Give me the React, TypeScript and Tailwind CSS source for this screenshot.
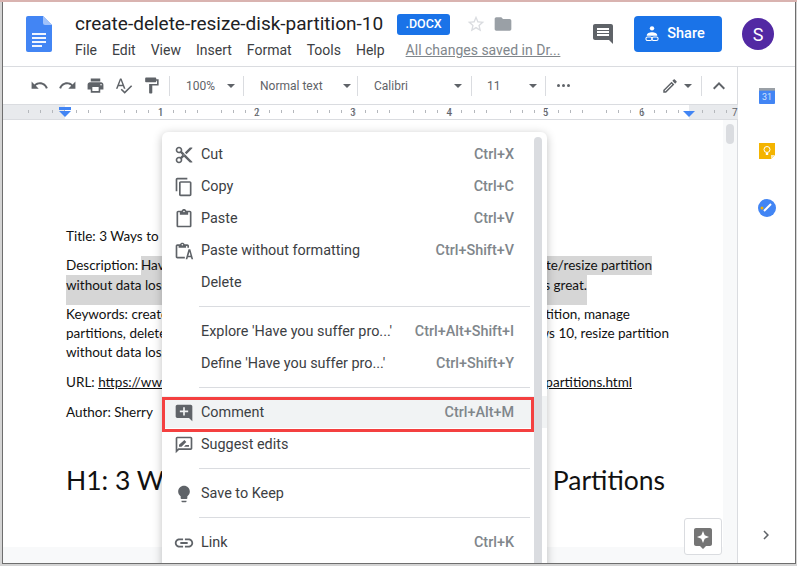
import type { ReactNode } from "react";

const P = {
  cut: "M9.64 7.64c.23-.5.36-1.05.36-1.64 0-2.21-1.79-4-4-4S2 3.79 2 6s1.79 4 4 4c.59 0 1.14-.13 1.64-.36L10 12l-2.36 2.36C7.14 14.13 6.59 14 6 14c-2.21 0-4 1.79-4 4s1.79 4 4 4 4-1.79 4-4c0-.59-.13-1.14-.36-1.64L12 14l7 7h3v-1L9.64 7.64zM6 8c-1.1 0-2-.89-2-2s.9-2 2-2 2 .89 2 2-.9 2-2 2zm0 12c-1.1 0-2-.89-2-2s.9-2 2-2 2 .89 2 2-.9 2-2 2zm6-7.5c-.28 0-.5-.22-.5-.5s.22-.5.5-.5.5.22.5.5-.22.5-.5.5zM19 3l-6 6 2 2 7-7V3h-3z",
  copy: "M16 1H4c-1.1 0-2 .9-2 2v14h2V3h12V1zm3 4H8c-1.1 0-2 .9-2 2v14c0 1.1.9 2 2 2h11c1.1 0 2-.9 2-2V7c0-1.1-.9-2-2-2zm0 16H8V7h11v14z",
  paste: "M19 2h-4.18C14.4.84 13.3 0 12 0c-1.3 0-2.4.84-2.82 2H5c-1.1 0-2 .9-2 2v16c0 1.1.9 2 2 2h14c1.1 0 2-.9 2-2V4c0-1.1-.9-2-2-2zm-7 0c.55 0 1 .45 1 1s-.45 1-1 1-1-.45-1-1 .45-1 1-1zm7 18H5V4h2v3h10V4h2v16z",
  pastePlain: "M13 21H4c-1 0-2-.9-2-2V6c0-1 1-2 2-2h3.2C7.6 2.8 8.7 2 10 2s2.4.8 2.8 2H16c1 0 2 1 2 2v2h-2V6h-1.5v2h-9V6H4v13h9v2zM10 3.5c-.5 0-1 .4-1 1s.5 1 1 1 1-.4 1-1-.5-1-1-1zM18 10h1.6L23 22h-2l-.7-2.500h-3.600L16 22h-2l3.400-12zm.8 2.800L17.200 17.800h2.600l-1-5z",
  addComment: "M22 4c0-1.1-.9-2-2-2H4c-1.1 0-2 .9-2 2v12c0 1.1.9 2 2 2h14l4 4V4zm-5 7h-4v4h-2v-4H7V9h4V5h2v4h4v2z",
  suggest: "M20 2H4c-1.100 0-2 .9-2 2v18l4-4h14c1.100 0 2-.9 2-2V4c0-1.100-.9-2-2-2zm0 14H5.170L4 17.170V4h16v12zM6 14v-2.300L12.500 6l2.300 2.300L9 14H6zm6 0l2-2h4v2h-6z",
  bulb: "M9 21c0 .55.45 1 1 1h4c.55 0 1-.45 1-1v-1H9v1zm3-19C8.140 2 5 5.140 5 9c0 2.380 1.190 4.470 3 5.740V17c0 .55.45 1 1 1h6c.55 0 1-.45 1-1v-2.260c1.810-1.270 3-3.360 3-5.740 0-3.860-3.140-7-7-7z",
  link: "M3.900 12c0-1.710 1.390-3.100 3.100-3.100h4V7H7c-2.760 0-5 2.240-5 5s2.240 5 5 5h4v-1.900H7c-1.710 0-3.100-1.390-3.100-3.100zM8 13h8v-2H8v2zm9-6h-4v1.900h4c1.710 0 3.100 1.390 3.100 3.100s-1.390 3.100-3.100 3.100h-4V17h4c2.760 0 5-2.240 5-5s-2.240-5-5-5z",
  undo: "M12.500 8c-2.650 0-5.050.99-6.900 2.600L2 7v9h9l-3.620-3.620c1.390-1.160 3.160-1.880 5.120-1.880 3.540 0 6.550 2.310 7.600 5.500l2.370-.78C21.080 11.030 17.150 8 12.500 8z",
  redo: "M18.400 10.600C16.550 8.990 14.150 8 11.500 8c-4.650 0-8.580 3.030-9.960 7.220L3.900 16c1.050-3.190 4.050-5.500 7.600-5.500 1.950 0 3.730.72 5.120 1.880L13 16h9V7l-3.600 3.600z",
  print: "M19 8H5c-1.660 0-3 1.340-3 3v6h4v4h12v-4h4v-6c0-1.660-1.340-3-3-3zm-3 11H8v-5h8v5zm3-7c-.55 0-1-.45-1-1s.45-1 1-1 1 .45 1 1-.45 1-1 1zm-1-9H6v4h12V3z",
  spell: "M12.450 16h2.090L9.430 3H7.570L2.460 16h2.090l1.120-3h5.640l1.140 3zm-6.020-5L8.500 5.480 10.570 11H6.430zm15.160.59l-8.090 8.090L9.830 16l-1.410 1.410 5.090 5.090L23 13l-1.410-1.410z",
  paint: "M18 4V3c0-.55-.45-1-1-1H5c-.55 0-1 .45-1 1v4c0 .55.45 1 1 1h12c.55 0 1-.45 1-1V6h1v4H9v11c0 .55.45 1 1 1h2c.55 0 1-.45 1-1v-9h8V4h-3z",
  pen: "M14.060 9.020l.92.92L5.920 19H5v-.92l9.060-9.060M17.660 3c-.25 0-.51.1-.7.29l-1.830 1.830 3.750 3.750 1.830-1.830c.39-.39.39-1.020 0-1.410l-2.340-2.340c-.2-.2-.45-.29-.71-.29zm-3.600 3.190L3 17.250V21h3.750L17.810 9.940l-3.750-3.750z",
  comments: "M21.990 4c0-1.100-.89-2-1.990-2H4c-1.100 0-2 .9-2 2v12c0 1.100.9 2 2 2h14l4 4-.01-18zM18 14H6v-2h12v2zm0-3H6V9h12v2zm0-3H6V6h12v2z",
  folder: "M10 4H4c-1.100 0-1.990.9-1.990 2L2 18c0 1.100.9 2 2 2h16c1.100 0 2-.9 2-2V8c0-1.100-.9-2-2-2h-8l-2-2z",
  star: "M22 9.240l-7.190-.62L12 2 9.190 8.630 2 9.240l5.460 4.730L5.820 21 12 17.270 18.180 21l-1.630-7.030L22 9.240zM12 15.400l-3.760 2.270 1-4.280-3.320-2.880 4.380-.38L12 6.100l1.710 4.040 4.380.38-3.320 2.880 1 4.280L12 15.400z",
  less: "M12 8l-6 6 1.410 1.410L12 10.830l4.590 4.580L18 14z",
  chevron: "M10 6L8.590 7.410 13.170 12l-4.580 4.590L10 18l6-6z",
  explore: "M19 3H5c-1.100 0-2 .9-2 2v14c0 1.100.9 2 2 2h4l3 3 3-3h4c1.100 0 2-.9 2-2V5c0-1.100-.9-2-2-2zm-7 3l1.700 4.300L18 12l-4.300 1.700L12 18l-1.700-4.300L6 12l4.300-1.700L12 6z",
};

function Icon({ d, className }: { d: string; className: string }) {
  return (
    <svg viewBox="0 0 24 24" className={className} fill="currentColor">
      <path d={d} fillRule="evenodd" />
    </svg>
  );
}

function Caret() {
  return <span className="h-0 w-0 border-x-[4px] border-t-[4px] border-x-transparent border-t-[#5f6368]" />;
}

function Divider() {
  return <span className="h-[20px] w-px shrink-0 bg-[#dadce0]" />;
}

function ToolBtn({ d }: { d: string }) {
  return (
    <span className="flex h-[28px] w-[28px] shrink-0 items-center justify-center">
      <Icon d={d} className="h-[19px] w-[19px] text-[#5f6368]" />
    </span>
  );
}

function Pick({ label, className }: { label: string; className: string }) {
  return (
    <span className={`flex shrink-0 items-center justify-between text-[12px] text-[#5f6368] ${className}`}>
      {label}
      <Caret />
    </span>
  );
}

function Ruler() {
  const ticks = Array.from({ length: 62 }, (_, i) => i);
  return (
    <svg viewBox="3 0 735 14" className="block h-[14px] w-[735px] font-['Roboto',sans-serif]">
      <rect x="3" y="0" width="62" height="14" fill="#e8eaed" />
      <rect x="689" y="0" width="49" height="14" fill="#e8eaed" />
      {ticks.map((i) => {
        const x = 16 + i * 12.04;
        if (i % 8 === 0) return null;
        const tall = i % 4 === 0;
        return <rect key={i} x={Math.round(x)} y={tall ? 3 : 5} width="1" height={tall ? 8 : 3} fill="#b5b8bc" />;
      })}
      {[1, 2, 3, 4, 5, 6].map((n) => (
        <text key={n} x={64.500 + n * 96.200} y="11" fontSize="10" textAnchor="middle" fill="#5f6368">
          {n}
        </text>
      ))}
      <text x="737.500" y="11" fontSize="10" textAnchor="end" fill="#5f6368">
        7
      </text>
      <rect x="59" y="2" width="12" height="3" fill="#4285f4" />
      <path d="M59 6h12l-6 6z" fill="#4285f4" />
      <path d="M683 6h12l-6 6z" fill="#4285f4" />
    </svg>
  );
}

function Row({ d, label, keys, iconClass }: { d?: string; label: string; keys?: string; iconClass?: string }) {
  return (
    <div className="flex h-[32px] items-center pr-[33px] pt-[2px]">
      <span className="flex w-[39px] shrink-0 items-center justify-center pl-[5px]">
        {d && <Icon d={d} className={iconClass ?? "h-[20px] w-[20px] text-[#5f6368]"} />}
      </span>
      <span className="text-[14.400px] text-[#3c4043]">{label}</span>
      {keys && <span className="ml-auto text-[14.400px] font-medium text-[#80868b]">{keys}</span>}
    </div>
  );
}

function MenuLine() {
  return (
    <div className="flex h-[17px] items-center pl-[37px] pr-[17px]">
      <div className="h-px w-full bg-[#dadce0]" />
    </div>
  );
}

function DocLine({ children, className }: { children: ReactNode; className: string }) {
  return <div className={`flex h-[19px] items-center justify-between whitespace-nowrap ${className}`}>{children}</div>;
}

export default function App() {
  return (
    <div className="h-[566px] w-[797px] overflow-hidden border-t-2 border-[#d9b3b0] bg-[#d4d4d4] pb-[2px] pl-[2px] pr-[1px] font-['Roboto',sans-serif]">
      <div className="relative flex h-full flex-col overflow-hidden border-x border-b border-[#6e6e6e] bg-white">
        {/* Header */}
        <header className="flex h-[65px] shrink-0 border-b border-[#dadce0]">
          <div className="ml-[23px] mt-[14px] w-[26px] shrink-0">
            <svg viewBox="0 0 26 36" className="h-[36px] w-[26px]">
              <path d="M2 0h15l9 9v25a2 2 0 0 1-2 2H2a2 2 0 0 1-2-2V2a2 2 0 0 1 2-2z" fill="#4285f4" />
              <path d="M17 0l9 9h-7a2 2 0 0 1-2-2z" fill="#a1c2fa" />
              <path d="M6 17h14v2H6zM6 21h14v2H6zM6 25h14v2H6zM6 29h10v2H6z" fill="#f1f5fe" />
            </svg>
          </div>
          <div className="ml-[23px] flex-1">
            <div className="mt-[11px] flex h-[22px] items-center">
              <span className="text-[19px] text-[#202124]">create-delete-resize-disk-partition-10</span>
              <span className="ml-[14px] flex h-[21px] w-[53px] items-center justify-center rounded-[3px] bg-[#1a73e8] text-[12.500px] font-medium text-white">
                .DOCX
              </span>
              <Icon d={P.star} className="ml-[16px] h-[20px] w-[20px] text-[#dadce0]" />
              <Icon d={P.folder} className="ml-[7px] h-[20px] w-[20px] text-[#9aa0a6]" />
            </div>
            <div className="mt-[5px] flex items-center gap-[15px] text-[14px] text-[#3c4043]">
              <span>File</span>
              <span>Edit</span>
              <span>View</span>
              <span>Insert</span>
              <span>Format</span>
              <span>Tools</span>
              <span>Help</span>
              <span className="ml-[6px] text-[#80868b] underline">All changes saved in Dr...</span>
            </div>
          </div>
          <div className="flex items-center pr-[21px]">
            <Icon d={P.comments} className="h-[24px] w-[24px] text-[#5f6368]" />
            <span className="ml-[19px] flex h-[36px] w-[88px] items-center justify-center gap-[8px] rounded-[4px] bg-[#1a73e8] pr-[6px] text-[14.500px] font-medium text-white">
              <svg viewBox="0 0 16 20" className="h-[18px] w-[14px]" fill="none">
                <circle cx="8" cy="3.500" r="2.500" fill="#fff" />
                <path d="M2 12c0-3 3-4 6-4s6 1 6 4z" fill="#fff" />
                <rect x="1" y="13.500" width="7" height="4" rx="2" stroke="#fff" strokeWidth="1.200" />
                <rect x="8" y="13.500" width="7" height="4" rx="2" stroke="#fff" strokeWidth="1.200" />
              </svg>
              Share
            </span>
            <span className="ml-[20px] flex h-[32px] w-[32px] items-center justify-center rounded-full bg-[#5229a3] text-[18px] text-white">
              S
            </span>
          </div>
        </header>

        <div className="flex min-h-0 flex-1">
          <div className="flex w-[735px] shrink-0 flex-col border-r border-[#dadce0]">
            {/* Toolbar */}
            <div className="flex h-[38px] shrink-0 items-center border-b border-[#dadce0] pl-[22px]">
              <ToolBtn d={P.undo} />
              <ToolBtn d={P.redo} />
              <ToolBtn d={P.print} />
              <ToolBtn d={P.spell} />
              <ToolBtn d={P.paint} />
              <span className="w-[4px]" />
              <Divider />
              <Pick label="100%" className="w-[73px] pl-[16px] pr-[8px]" />
              <Divider />
              <Pick label="Normal text" className="w-[113px] pl-[16px] pr-[6px]" />
              <Divider />
              <Pick label="Calibri" className="w-[113px] pl-[16px] pr-[9px]" />
              <Divider />
              <Pick label="11" className="w-[73px] pl-[15px] pr-[8px]" />
              <Divider />
              <span className="ml-[11px] flex w-[14px] gap-[2px]">
                <span className="h-[3px] w-[3px] rounded-full bg-[#5f6368]" />
                <span className="h-[3px] w-[3px] rounded-full bg-[#5f6368]" />
                <span className="h-[3px] w-[3px] rounded-full bg-[#5f6368]" />
              </span>
              <span className="flex-1" />
              <Icon d={P.pen} className="h-[18px] w-[18px] text-[#5f6368]" />
              <span className="ml-[5px] mr-[9px] flex items-center">
                <Caret />
              </span>
              <Divider />
              <Icon d={P.less} className="ml-[5px] mr-[6px] h-[24px] w-[24px] text-[#5f6368]" />
            </div>
            {/* Ruler */}
            <div className="h-[15px] shrink-0 border-b border-[#dadce0] bg-white">
              <Ruler />
            </div>
            {/* Document */}
            <div className="relative min-h-0 flex-1 overflow-hidden bg-[#f8f9fa]">
              <div className="h-[427px] w-[720px] bg-white pl-[63px] pt-[107px] font-['Lato',sans-serif] text-[13.500px] text-[#111]">
                <DocLine className="w-[400px]">Title: 3 Ways to Create</DocLine>
                <div className="mt-[10px] flex h-[19px] w-[586px] items-center whitespace-nowrap">
                  <span className="w-[75px] shrink-0">Description: </span>
                  <span className="flex h-[19px] flex-1 items-center justify-between bg-[#d6d6d6]">
                    <span>Have</span>
                    <span>ate/resize partition</span>
                  </span>
                </div>
                <DocLine className="h-[30px] w-[521px] items-start bg-[#d6d6d6]">
                  <span>without data loss</span>
                  <span>is great.</span>
                </DocLine>
                <DocLine className="w-[564px]">
                  <span>Keywords: create</span>
                  <span>rtition, manage</span>
                </DocLine>
                <DocLine className="w-[603px]">
                  <span>partitions, delete</span>
                  <span>ws 10, resize partition</span>
                </DocLine>
                <DocLine className="w-[400px]">without data loss</DocLine>
                <DocLine className="mt-[11px] w-[566px]">
                  <span>
                    URL: <span className="underline">https://www</span>
                  </span>
                  <span className="underline">-partitions.html</span>
                </DocLine>
                <DocLine className="mt-[11px] w-[400px]">Author: Sherry</DocLine>
                <DocLine className="mt-[40px] h-[38px] w-[599px] text-[26.500px]">
                  <span>H1: 3 Ways</span>
                  <span>Partitions</span>
                </DocLine>
              </div>
              <div className="absolute left-[723px] top-[4px] h-[20px] w-[8px] rounded-full bg-[#dadce0]" />
              <span className="absolute left-[681px] top-[398px] flex h-[37px] w-[38px] items-center justify-center rounded-[3px] border border-[#dadce0] bg-white">
                <Icon d={P.explore} className="h-[24px] w-[24px] text-[#757575]" />
              </span>
            </div>
          </div>

          {/* Side panel */}
          <aside className="flex flex-1 flex-col items-center pt-[21px]">
            <svg viewBox="0 0 18 18" className="h-[16px] w-[16px]">
              <rect width="18" height="18" rx="1" fill="#4285f4" />
              <rect width="18" height="3" fill="#9aa0a6" />
              <text x="9" y="14" fontSize="10" textAnchor="middle" fill="#d2e3fc">31</text>
            </svg>
            <svg viewBox="0 0 16 16" className="mt-[39px] h-[16px] w-[16px]">
              <path d="M0 0h16v12l-4 4H0z" fill="#f4b400" />
              <path d="M12 16v-4h4z" fill="#fbe9b2" />
              <circle cx="8" cy="6.500" r="3" fill="none" stroke="#fff" strokeWidth="1" />
              <rect x="6.800" y="10" width="2.400" height="2" fill="#fff" />
            </svg>
            <svg viewBox="0 0 18 18" className="mt-[40px] h-[18px] w-[18px]">
              <circle cx="9" cy="9" r="9" fill="#4285f4" />
              <path d="M6 12l7-7" stroke="#fff" strokeWidth="2" />
              <circle cx="4" cy="9" r="1.500" fill="#f4b400" />
            </svg>
            <Icon d={P.chevron} className="mb-[19px] mr-[2px] mt-auto h-[18px] w-[18px] text-[#5f6368]" />
          </aside>
        </div>

        {/* Context menu */}
        <div className="absolute left-[159px] top-[130px] h-[440px] w-[385px] rounded-t-[6px] bg-white pt-[6px] shadow-[0_2px_10px_rgba(0,0,0,0.25)]">
          <Row d={P.cut} label="Cut" keys="Ctrl+X" />
          <Row d={P.copy} label="Copy" keys="Ctrl+C" />
          <Row d={P.paste} label="Paste" keys="Ctrl+V" />
          <Row d={P.pastePlain} label="Paste without formatting" keys="Ctrl+Shift+V" />
          <Row label="Delete" />
          <MenuLine />
          <Row label="Explore 'Have you suffer pro...'" keys="Ctrl+Alt+Shift+I" />
          <Row label="Define 'Have you suffer pro...'" keys="Ctrl+Shift+Y" />
          <MenuLine />
          <div className="bg-[#f1f3f4]">
            <Row d={P.addComment} label="Comment" keys="Ctrl+Alt+M" />
          </div>
          <Row d={P.suggest} label="Suggest edits" />
          <MenuLine />
          <Row d={P.bulb} label="Save to Keep" />
          <MenuLine />
          <Row d={P.link} label="Link" keys="Ctrl+K" iconClass="h-[22px] w-[22px] text-[#5f6368]" />
          {/* scrollbar + annotation box */}
          <div className="absolute right-[5px] top-[5px] h-[430px] w-[8px] rounded-t-full bg-[#dadce0]" />
          <div className="absolute left-0 top-[265px] h-[35px] w-[372px] border-[3px] border-[#f44040]" />
        </div>
      </div>
    </div>
  );
}
